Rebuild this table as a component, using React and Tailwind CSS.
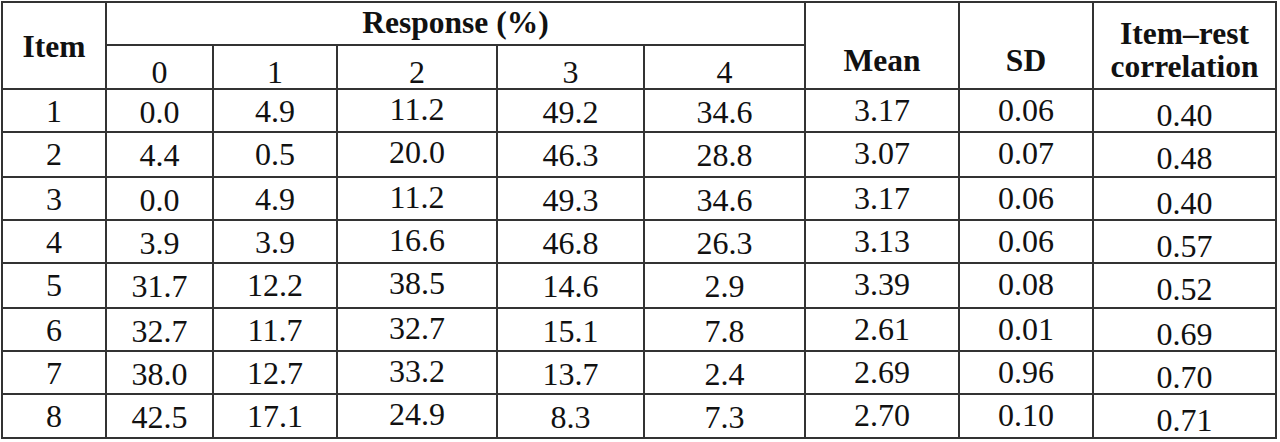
const rows = [
  ["1", "0.0", "4.9", "11.2", "49.2", "34.6", "3.17", "0.06", "0.40"],
  ["2", "4.4", "0.5", "20.0", "46.3", "28.8", "3.07", "0.07", "0.48"],
  ["3", "0.0", "4.9", "11.2", "49.3", "34.6", "3.17", "0.06", "0.40"],
  ["4", "3.9", "3.9", "16.6", "46.8", "26.3", "3.13", "0.06", "0.57"],
  ["5", "31.7", "12.2", "38.5", "14.6", "2.9", "3.39", "0.08", "0.52"],
  ["6", "32.7", "11.7", "32.7", "15.1", "7.8", "2.61", "0.01", "0.69"],
  ["7", "38.0", "12.7", "33.2", "13.7", "2.4", "2.69", "0.96", "0.70"],
  ["8", "42.5", "17.1", "24.9", "8.3", "7.3", "2.70", "0.10", "0.71"],
]

// small per-column nudges, the scan isn't perfectly aligned
const colPad = ["pt-[5px]", "pt-[6px]", "pt-[5px]", "pt-[3px]", "pt-[6px]", "pt-[6px]", "pt-[4px]", "pt-[4px]", "pt-[9px]"]

const cell = "border-r-2 border-b-2 border-[#333] flex justify-center leading-none"

export default function App() {
  return (
    <div className="w-[1280px] h-[442px] bg-white pt-px pl-px text-[#111] font-['Liberation_Serif','Tinos','DejaVu_Serif',serif]">
      <div className="grid grid-cols-[104px_107px_124px_160px_147px_161px_154px_134px_183px] grid-rows-[43px_44px_43px_45px_43px_43px_45px_43px_43px_44px] w-[1276px] border-l-2 border-t-2 border-[#333] text-[32px]">
        <div className={`${cell} row-span-2 font-bold pt-[28px] text-[31.5px]`}>Item</div>
        <div className={`${cell} col-span-5 font-bold pt-[4px] text-[31.5px]`}>Response (%)</div>
        <div className={`${cell} row-span-2 font-bold pt-[42px] text-[31.5px]`}>Mean</div>
        <div className={`${cell} row-span-2 font-bold pt-[42px] text-[31.5px]`}>SD</div>
        <div className={`${cell} row-span-2 font-bold pt-[17px] text-[31.5px] text-center`}>
          <div className="leading-[33px] -mt-[3px]">Item–rest<br />correlation</div>
        </div>
        {["0", "1", "2", "3", "4"].map((h) => (
          <div key={h} className={`${cell} pt-[10px]`}>{h}</div>
        ))}
        {rows.map((r, i) =>
          r.map((v, j) => (
            <div key={`${i}-${j}`} className={`${cell} ${colPad[j]}`}>{v}</div>
          ))
        )}
      </div>
    </div>
  )
}
